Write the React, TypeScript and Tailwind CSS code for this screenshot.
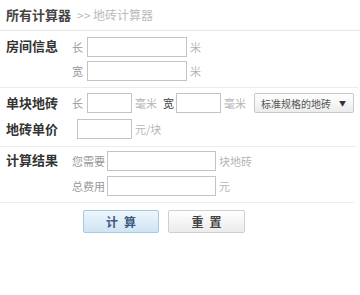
import React from "react";

const font = { fontFamily: '"Noto Sans CJK SC", "Liberation Sans", sans-serif' };

function Field({ w = "w-[100px]" }: { w?: string }) {
  return <input type="text" className={`${w} h-[20px] border border-[#c4c4c4] bg-white outline-none`} />;
}

function Unit({ children }: { children: React.ReactNode }) {
  return <span className="ml-[3px] text-[11px] leading-none text-[#b5b5b5]">{children}</span>;
}

export default function App() {
  return (
    <div className="w-[360px] h-[295px] bg-white text-[#333]" style={font}>
      {/* breadcrumb */}
      <div className="h-[31px] flex items-center pl-[6px] border-b border-[#e6e6e6]">
        <span className="text-[13px] font-bold text-[#444]">所有计算器</span>
        <span className="ml-[6px] text-[12px] text-[#bbb]">&gt;&gt; 地砖计算器</span>
      </div>

      {/* room size */}
      <div className="flex pl-[6px] pt-[6px] pb-[6px] border-b border-[#ececec] mr-[2px]">
        <div className="w-[66px] text-[13px] font-bold leading-[18px]">房间信息</div>
        <div className="flex flex-col gap-[4px]">
          <div className="flex items-center">
            <span className="w-[15px] text-[11px] text-[#999]">长</span>
            <Field />
            <Unit>米</Unit>
          </div>
          <div className="flex items-center">
            <span className="w-[15px] text-[11px] text-[#999]">宽</span>
            <Field />
            <Unit>米</Unit>
          </div>
        </div>
      </div>

      {/* tile */}
      <div className="pl-[6px] pt-[5px] pb-[7px] border-b border-[#ececec] mr-[4px]">
        <div className="flex items-center h-[20px]">
          <div className="w-[66px] text-[13px] font-bold">单块地砖</div>
          <span className="w-[15px] text-[11px] text-[#999]">长</span>
          <Field w="w-[45px]" />
          <Unit>毫米</Unit>
          <span className="ml-[6px] w-[13px] text-[11px] text-[#444]">宽</span>
          <Field w="w-[45px]" />
          <Unit>毫米</Unit>
          <div className="ml-[8px] w-[100px] h-[20px] flex items-center justify-between pl-[6px] pr-[7px] border border-[#c8c8c8] rounded-[2px] bg-gradient-to-b from-white to-[#ececec]">
            <span className="text-[10px] text-[#555]">标准规格的地砖</span>
            <span className="text-[7px] text-[#333]">▼</span>
          </div>
        </div>
        <div className="flex items-center h-[20px] mt-[6px]">
          <div className="w-[71px] text-[13px] font-bold">地砖单价</div>
          <Field w="w-[55px]" />
          <Unit>元/块</Unit>
        </div>
      </div>

      {/* result */}
      <div className="flex pl-[6px] pt-[4px] pb-[6px] border-b border-[#ececec] mr-[6px]">
        <div className="w-[66px] text-[13px] font-bold leading-[18px]">计算结果</div>
        <div className="flex flex-col gap-[5px]">
          <div className="flex items-center">
            <span className="w-[35px] text-[11px] text-[#999]">您需要</span>
            <Field w="w-[109px]" />
            <Unit>块地砖</Unit>
          </div>
          <div className="flex items-center">
            <span className="w-[35px] text-[11px] text-[#999]">总费用</span>
            <Field w="w-[109px]" />
            <Unit>元</Unit>
          </div>
        </div>
      </div>

      {/* buttons */}
      <div className="flex gap-[9px] pl-[83px] mt-[7px]">
        <button className="w-[76px] h-[23px] rounded-[2px] border border-[#a8c8e2] bg-gradient-to-b from-[#eef6fc] to-[#cfe4f4] text-[12px] font-bold text-[#3d5a80] tracking-[6px] pl-[6px]">
          计算
        </button>
        <button className="w-[77px] h-[23px] rounded-[2px] border border-[#cfcfcf] bg-gradient-to-b from-white to-[#ebebeb] text-[12px] font-bold text-[#444] tracking-[6px] pl-[6px]">
          重置
        </button>
      </div>
    </div>
  );
}
